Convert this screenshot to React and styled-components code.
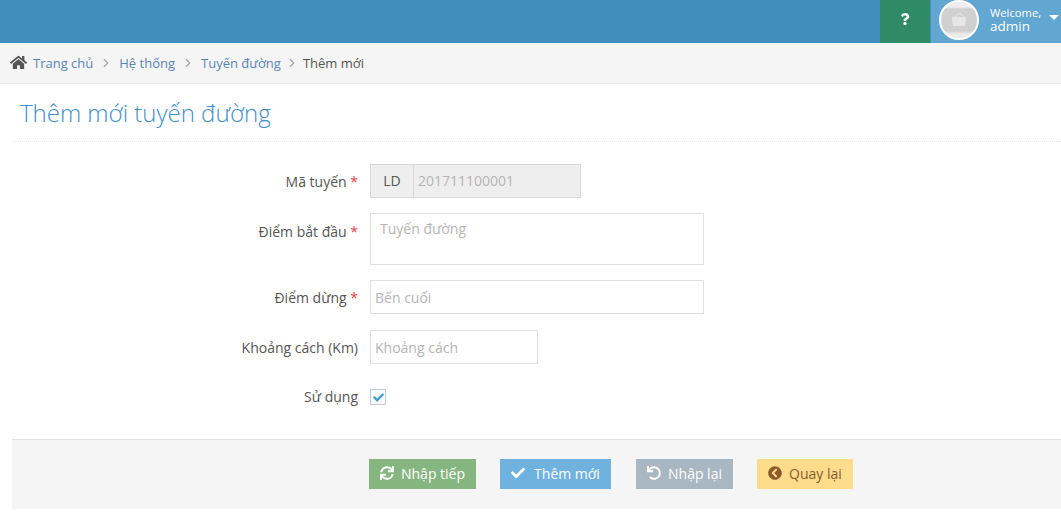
import React from "react";
import styled, { createGlobalStyle } from "styled-components";
import {
  FaHome,
  FaQuestion,
  FaCheck,
  FaSync,
  FaUndo,
  FaChevronCircleLeft,
} from "react-icons/fa";
import { FiChevronRight } from "react-icons/fi";

const GlobalStyle = createGlobalStyle`
  * { box-sizing: border-box; }
  html, body { margin: 0; background: #fff; }
  body {
    font-family: "Open Sans", "Liberation Sans", sans-serif;
    font-size: 14px;
    color: #555;
  }
`;

const TopBar = styled.header`
  height: 43px;
  display: flex;
  justify-content: flex-end;
  background: #428eba;
`;

const HelpButton = styled.div`
  width: 50px;
  padding-bottom: 5px;
  display: flex;
  align-items: center;
  justify-content: center;
  background: #2e8b65;
  color: #fff;
  font-size: 12px;
`;

const UserBox = styled.div`
  width: 130px;
  margin-left: 1px;
  padding: 0 0 3px 8px;
  display: flex;
  align-items: center;
  background: #62a6d2;
  color: #fff;
`;

const Avatar = styled.div`
  width: 40px;
  height: 40px;
  flex: none;
  border-radius: 50%;
  border: 2px solid #fff;
  background: linear-gradient(
    #eeeeee 0,
    #eeeeee 5px,
    #d0d0d0 7px,
    #d0d0d0 29px,
    #ececec 32px
  );
  display: flex;
  align-items: center;
  justify-content: center;
`;

const UserText = styled.div`
  margin-left: 11px;
  display: flex;
  flex-direction: column;
  small {
    font-size: 11.2px;
    line-height: 13px;
  }
  span {
    font-size: 13.5px;
    line-height: 15px;
  }
`;

const Caret = styled.i`
  margin-left: 8px;
  margin-top: -6px;
  border-left: 5px solid transparent;
  border-right: 5px solid transparent;
  border-top: 5px solid #fff;
`;

const Breadcrumb = styled.nav`
  height: 41px;
  padding: 0 0 1px 10px;
  display: flex;
  align-items: center;
  background: #f5f5f5;
  border-bottom: 1px solid #e5e5e5;
  font-size: 13px;
  svg.home {
    font-size: 17px;
    color: #555;
    margin-right: 6px;
  }
  a {
    color: #5b85b5;
  }
  b {
    font-weight: 400;
    color: #555;
  }
`;

const Separator = styled(FiChevronRight)`
  font-size: 14px;
  color: #a5a5a5;
  margin: 0 ${(p) => (p.$tight ? 4 : 6)}px;
`;

const Main = styled.main`
  padding-left: 12px;
`;

const Title = styled.h1`
  margin: 0;
  height: 58px;
  padding: 12px 0 0 8px;
  font-size: 24px;
  line-height: 34px;
  font-weight: 300;
  color: #3f8fca;
  border-bottom: 1px dotted #e6e6e6;
`;

const Form = styled.form`
  padding-top: 22px;
  display: flex;
  flex-direction: column;
`;

const Row = styled.div`
  display: grid;
  grid-template-columns: 346px 1fr;
  column-gap: 12px;
  align-items: ${(p) => (p.$center ? "center" : "start")};
  margin-bottom: ${(p) => p.$gap}px;
`;

const Label = styled.label`
  text-align: right;
  font-size: 14px;
  line-height: 20px;
  padding-top: ${(p) => p.$top ?? 8}px;
  color: #555;
  em {
    font-style: normal;
    color: #e73d3d;
  }
`;

const CodeGroup = styled.div`
  width: 211px;
  height: 34px;
  display: flex;
  background: #eee;
  border: 1px solid #d9d9d9;
  font-size: 14px;
  line-height: 32px;
  span {
    width: 43px;
    text-align: center;
    border-right: 1px solid #d9d9d9;
    color: #555;
  }
  div {
    padding-left: 4px;
    color: #b5b5b5;
  }
`;

const TextInput = styled.input`
  display: block;
  width: ${(p) => p.$width}px;
  height: 34px;
  padding: 0 4px;
  border: 1px solid #e0e0e0;
  outline: none;
  font: inherit;
  font-size: 14px;
  background: #fff;
  &::placeholder {
    color: #b5b5b5;
    opacity: 1;
  }
`;

const TextArea = styled.textarea`
  display: block;
  width: 334px;
  height: 52px;
  padding: 5px 9px;
  border: 1px solid #e0e0e0;
  outline: none;
  resize: none;
  font: inherit;
  font-size: 14px;
  line-height: 20px;
  &::placeholder {
    color: #b5b5b5;
    opacity: 1;
  }
`;

const CheckBox = styled.div`
  width: 16px;
  height: 16px;
  border: 1px solid #c3ccd4;
  background: #f8fafc;
  display: flex;
  align-items: center;
  justify-content: center;
  color: #3d9ad1;
  font-size: 11px;
`;

const Footer = styled.footer`
  height: 70px;
  margin-top: 32px;
  padding: 19px 0 0 357px;
  display: flex;
  align-items: flex-start;
  gap: 24px;
  background: #f5f5f5;
  border-top: 1px solid #e2e2e2;
`;

const Button = styled.button`
  width: ${(p) => p.$width}px;
  height: 30px;
  margin-left: ${(p) => p.$shift || 0}px;
  padding: 0 0 2px;
  display: flex;
  align-items: center;
  justify-content: center;
  gap: ${(p) => p.$iconGap}px;
  border: none;
  font: inherit;
  font-size: 14px;
  background: ${(p) => p.$bg};
  color: ${(p) => p.$fg};
  svg {
    font-size: 14px;
  }
`;

export default function App() {
  return (
    <>
      <GlobalStyle />
      <TopBar>
        <HelpButton>
          <FaQuestion />
        </HelpButton>
        <UserBox>
          <Avatar>
            <svg width="18" height="14" viewBox="0 0 18 14">
              <path d="M2 4h14l-1 9H3z" fill="#e6e6e6" />
              <path d="M5 4l3-3h3l3 3" fill="none" stroke="#e6e6e6" />
            </svg>
          </Avatar>
          <UserText>
            <small>Welcome,</small>
            <span>admin</span>
          </UserText>
          <Caret />
        </UserBox>
      </TopBar>
      <Breadcrumb>
        <FaHome className="home" />
        <a>Trang chủ</a>
        <Separator />
        <a>Hệ thống</a>
        <Separator />
        <a>Tuyến đường</a>
        <Separator $tight />
        <b>Thêm mới</b>
      </Breadcrumb>
      <Main>
        <Title>Thêm mới tuyến đường</Title>
        <Form>
          <Row $gap={15}>
            <Label>
              Mã tuyến <em>*</em>
            </Label>
            <CodeGroup>
              <span>LD</span>
              <div>201711100001</div>
            </CodeGroup>
          </Row>
          <Row $gap={15}>
            <Label $top={9}>
              Điểm bắt đầu <em>*</em>
            </Label>
            <TextArea placeholder="Tuyến đường" />
          </Row>
          <Row $gap={16}>
            <Label>
              Điểm dừng <em>*</em>
            </Label>
            <TextInput $width={334} placeholder="Bến cuối" />
          </Row>
          <Row $gap={23}>
            <Label>Khoảng cách (Km)</Label>
            <TextInput $width={168} placeholder="Khoảng cách" />
          </Row>
          <Row $gap={0} $center>
            <Label $top={0}>Sử dụng</Label>
            <CheckBox>
              <FaCheck />
            </CheckBox>
          </Row>
        </Form>
        <Footer>
          <Button $width={107} $iconGap={7} $bg="#86b67f" $fg="#fff">
            <FaSync />
            Nhập tiếp
          </Button>
          <Button $width={111} $iconGap={9} $bg="#6fb2e0" $fg="#fff">
            <FaCheck />
            Thêm mới
          </Button>
          <Button $width={97} $shift={1} $iconGap={7} $bg="#a9b7c2" $fg="#fff">
            <FaUndo />
            Nhập lại
          </Button>
          <Button $width={96} $iconGap={7} $bg="#fddc8c" $fg="#8c5a2b">
            <FaChevronCircleLeft />
            Quay lại
          </Button>
        </Footer>
      </Main>
    </>
  );
}
